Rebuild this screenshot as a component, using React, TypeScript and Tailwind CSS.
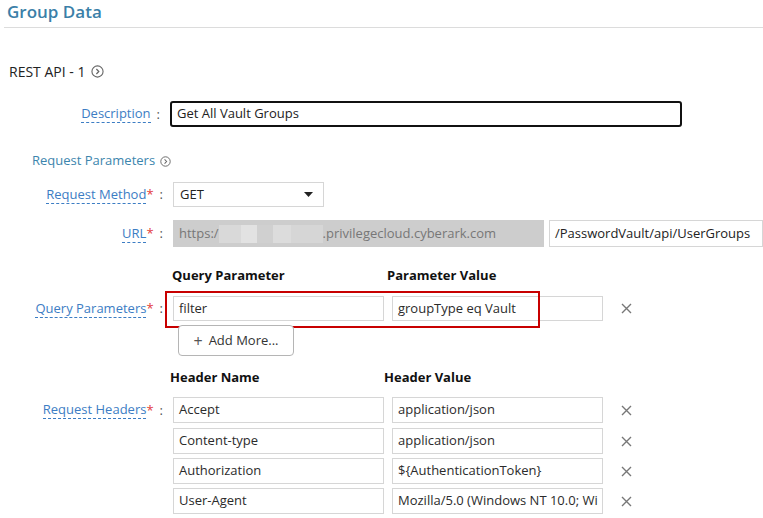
import { ReactNode } from "react"

const Chevron = ({ size = 13 }: { size?: number }) => (
  <svg width={size} height={size} viewBox="0 0 14 14" className="inline-block">
    <circle cx="7" cy="7" r="6" fill="none" stroke="#666" strokeWidth="1.2" />
    <path d="M5.8 4.3 L8.4 7 L5.8 9.7" fill="none" stroke="#666" strokeWidth="1.3" />
  </svg>
)

const Cross = () => (
  <svg width="11" height="11" viewBox="0 0 11 11">
    <path d="M1 1 L10 10 M10 1 L1 10" stroke="#777" strokeWidth="1.4" />
  </svg>
)

const Label = ({ text, req, width = 163 }: { text: string; req?: boolean; width?: number }) => (
  <div className="flex justify-end items-center shrink-0" style={{ width }}>
    <span className="text-[#3c7dc4] leading-[17px] border-b border-dashed border-[#3c7dc4]">{text}</span>
    {req && <span className="text-[#e23b3b] leading-[17px]">*</span>}
    <span className="ml-[6px] text-[#555] leading-[17px]">:</span>
  </div>
)

const Box = ({ children, w, h = 26 }: { children?: ReactNode; w: number; h?: number }) => (
  <div
    className="flex items-center border border-[#d6d6d6] bg-white px-[5px] text-[#2b2b2b] whitespace-nowrap overflow-hidden"
    style={{ width: w, height: h }}
  >
    {children}
  </div>
)

const headers = [
  ["Accept", "application/json"],
  ["Content-type", "application/json"],
  ["Authorization", "${AuthenticationToken}"],
  ["User-Agent", "Mozilla/5.0 (Windows NT 10.0; Wi"],
]

export default function App() {
  return (
    <div className="relative w-[763px] h-[518px] overflow-hidden bg-white text-[13px] text-[#333] font-['Open_Sans',sans-serif]">
      <div className="h-[27px] pl-[7px] pt-[1px]">
        <h1 className="text-[17px] leading-[22px] font-semibold text-[#3b7fa8]">Group Data</h1>
      </div>
      <div className="ml-[4px] h-px bg-[#dcdcdc]" />

      <div className="mt-[34px] ml-[9px] flex items-center gap-[6px] h-[18px]">
        <span className="text-[14px] text-[#222]">REST API - 1</span>
        <Chevron />
      </div>

      <div className="mt-[21px] flex items-center">
        <Label text="Description" width={160} />
        <div className="ml-[10px] w-[512px] h-[26px] border-2 border-[#111] rounded-[3px] flex items-center px-[5px] text-[#222]">
          Get All Vault Groups
        </div>
      </div>

      <div className="mt-[25px] ml-[32px] flex items-center gap-[5px] h-[18px]">
        <span className="text-[#3c85ad]">Request Parameters</span>
        <Chevron size={11} />
      </div>

      <div className="mt-[12px] flex items-center">
        <Label text="Request Method" req />
        <div className="ml-[10px] w-[151px] h-[25px] border border-[#d6d6d6] flex items-center justify-between pl-[6px] pr-[10px] text-[#222]">
          GET
          <svg width="9" height="5" viewBox="0 0 9 5">
            <path d="M0 0 L9 0 L4.5 5 Z" fill="#222" />
          </svg>
        </div>
      </div>

      <div className="mt-[13px] flex items-center">
        <Label text="URL" req />
        <div className="ml-[10px] w-[371px] h-[27px] bg-[#cdcdcd] flex items-center px-[6px] text-[#777] whitespace-nowrap">
          https:/
          <span className="flex h-[18px] w-[104px]">
            <span className="w-[22px] bg-[#d9d9d9]" />
            <span className="w-[16px] bg-[#e2e2e2]" />
            <span className="w-[16px] bg-[#d0d0d0]" />
            <span className="w-[18px] bg-[#dcdcdc]" />
            <span className="w-[32px] bg-[#d6d6d6]" />
          </span>
          .privilegecloud.cyberark.com
        </div>
        <div className="ml-[5px] w-[214px] h-[27px] border border-[#d6d6d6] flex items-center px-[5px] text-[#222] whitespace-nowrap">
          /PasswordVault/api/UserGroups
        </div>
      </div>

      <div className="mt-[19px] flex h-[20px] items-center font-bold text-[13px] text-[#111]">
        <span className="ml-[172px] w-[215px]">Query Parameter</span>
        <span>Parameter Value</span>
      </div>

      <div className="mt-[10px] flex items-center">
        <Label text="Query Parameters" req />
        <div className="ml-[10px] flex items-center gap-[8px]">
          <Box w={211} h={25}>filter</Box>
          <Box w={211} h={25}>groupType eq Vault</Box>
          <span className="ml-[10px] flex"><Cross /></span>
        </div>
      </div>

      <div className="relative z-10 mt-[4px] ml-[178px] w-[116px] h-[31px] border border-[#b5b5b5] rounded-[4px] bg-white flex items-center justify-center gap-[6px] text-[#333]">
        <span className="text-[16px] leading-none text-[#555]">+</span>
        Add More...
      </div>

      <div className="mt-[12px] flex h-[20px] items-center font-bold text-[13px] text-[#111]">
        <span className="ml-[170px] w-[214px]">Header Name</span>
        <span>Header Value</span>
      </div>

      <div className="mt-[9px] flex">
        <div className="h-[26px] flex items-center">
          <Label text="Request Headers" req />
        </div>
        <div className="ml-[10px] flex flex-col gap-[4px]">
          {headers.map(([name, value], i) => (
            <div key={name} className={`flex items-center gap-[8px] ${i === 1 ? "mt-[1px]" : ""}`}>
              <Box w={211}>{name}</Box>
              <Box w={211}>{value}</Box>
              <span className="ml-[10px] flex"><Cross /></span>
            </div>
          ))}
        </div>
      </div>

      <div className="absolute left-[165px] top-[291px] w-[375px] h-[37px] border-2 border-[#c80000] pointer-events-none" />
    </div>
  )
}
